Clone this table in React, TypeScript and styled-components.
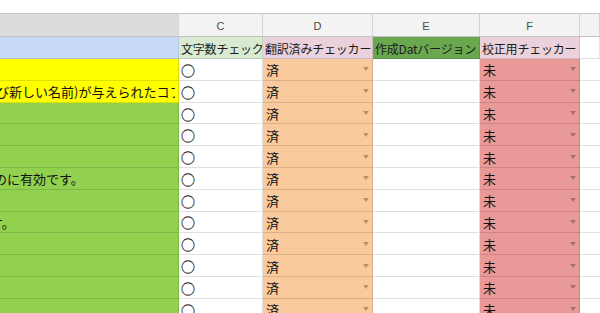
import React from 'react';
import styled, { createGlobalStyle } from 'styled-components';

const GlobalStyle = createGlobalStyle`
  html, body {
    margin: 0;
    padding: 0;
    background: #ffffff;
    overflow: hidden;
  }
`;

type ColKey = 'ab' | 'c' | 'd' | 'e' | 'f' | 'g';

const COLS = '179px 84px 110px 107px 100px 1fr';
const JP_FONT = `"MS PGothic", "Noto Sans CJK JP", sans-serif`;

// 列見出し
const headers: { key: ColKey; label: string; selected?: boolean }[] = [
  { key: 'ab', label: '', selected: true },
  { key: 'c', label: 'C' },
  { key: 'd', label: 'D' },
  { key: 'e', label: 'E' },
  { key: 'f', label: 'F' },
  { key: 'g', label: '' },
];

// 1行目（項目名）
const titles: { key: ColKey; text: string; bg: string }[] = [
  { key: 'ab', text: '', bg: '#c9daf8' },
  { key: 'c', text: '文字数チェック', bg: '#d9ead3' },
  { key: 'd', text: '翻訳済みチェッカー', bg: '#ead1dc' },
  { key: 'e', text: '作成Datバージョン', bg: '#6aa84f' },
  { key: 'f', text: '校正用チェッカー', bg: '#ead1dc' },
  { key: 'g', text: '', bg: '#ffffff' },
];

interface RowData {
  bg: string;
  text?: string;
  indent?: number;
}

const rows: RowData[] = [
  { bg: '#ffff00' },
  { bg: '#ffff00', text: 'び新しい名前)が与えられたコフ', indent: -4 },
  { bg: '#92d050' },
  { bg: '#92d050' },
  { bg: '#92d050' },
  { bg: '#92d050', text: 'のに有効です。', indent: -6 },
  { bg: '#92d050' },
  { bg: '#92d050', text: 'す。', indent: -10 },
  { bg: '#92d050' },
  { bg: '#92d050' },
  { bg: '#92d050' },
  { bg: '#92d050' },
];

const App: React.FC = () => {
  return (
    <>
      <GlobalStyle />
      <Page>
        <TopStrip />
        <Sheet>
          {headers.map((h) => (
            <ColHead key={h.key} $selected={h.selected}>
              {h.label}
            </ColHead>
          ))}
          {titles.map((t) => (
            <TitleCell key={t.key} $bg={t.bg}>
              {t.text}
            </TitleCell>
          ))}
          {rows.map((r, i) => (
            <React.Fragment key={i}>
              <Cell $bg={r.bg}>
                {r.text && <Overflow style={{ textIndent: r.indent }}>{r.text}</Overflow>}
              </Cell>
              <Cell $bg="#ffffff">
                <Mark>○</Mark>
              </Cell>
              <Cell $bg="#f9cb9c" $dropdown>
                済
              </Cell>
              <Cell $bg="#ffffff" />
              <Cell $bg="#ea9999" $dropdown>
                未
              </Cell>
              <Cell $bg="#ffffff" $last />
            </React.Fragment>
          ))}
        </Sheet>
      </Page>
    </>
  );
};

export default App;

const Page = styled.div`
  width: 600px;
  height: 313px;
  overflow: hidden;
  background: #ffffff;
`;

const TopStrip = styled.div`
  height: 14px;
  border-bottom: 1px solid #c6c6c6;
  box-sizing: border-box;
  background: #ffffff;
`;

const Sheet = styled.div`
  display: grid;
  grid-template-columns: ${COLS};
  grid-template-rows: 23px 22px;
  grid-auto-rows: 21.8px;
`;

const ColHead = styled.div<{ $selected?: boolean }>`
  display: flex;
  align-items: center;
  justify-content: center;
  box-sizing: border-box;
  background: ${(p) => (p.$selected ? '#dcdcdc' : '#f3f3f3')};
  border-right: 1px solid #d4d4d4;
  border-bottom: 1px solid #c0c0c0;
  font-family: 'Liberation Sans', Arial, sans-serif;
  font-size: 11px;
  color: #4a4a4a;
  padding-top: 1px;
`;

const TitleCell = styled.div<{ $bg: string }>`
  display: flex;
  align-items: center;
  box-sizing: border-box;
  padding: 2px 0 0 2px;
  background: ${(p) => p.$bg};
  border-right: 1px solid rgba(0, 0, 0, 0.1);
  border-bottom: 1px solid rgba(0, 0, 0, 0.12);
  font-family: ${JP_FONT};
  font-size: 12px;
  letter-spacing: -0.2px;
  color: #1a1a1a;
  white-space: nowrap;
  overflow: hidden;
`;

const Cell = styled.div<{ $bg: string; $dropdown?: boolean; $last?: boolean }>`
  position: relative;
  display: flex;
  align-items: center;
  box-sizing: border-box;
  padding: 1px 0 0 3px;
  background: ${(p) => p.$bg};
  border-right: 1px solid ${(p) => (p.$last ? 'transparent' : 'rgba(0, 0, 0, 0.13)')};
  border-bottom: 1px solid rgba(0, 0, 0, 0.12);
  font-family: ${JP_FONT};
  font-size: 13px;
  color: #111111;
  white-space: nowrap;
  overflow: hidden;

  ${(p) =>
    p.$dropdown &&
    `
    &::after {
      content: '';
      position: absolute;
      right: 3px;
      top: 50%;
      margin-top: -2px;
      border-left: 3px solid transparent;
      border-right: 3px solid transparent;
      border-top: 4px solid rgba(0, 0, 0, 0.28);
    }
  `}
`;

// 丸印は少し太めに見せる
const Mark = styled.span`
  font-size: 14px;
  color: #333333;
  margin-left: -1px;
  -webkit-text-stroke: 0.3px #333333;
`;

const Overflow = styled.span`
  display: block;
  width: 100%;
  margin-left: -3px;
  white-space: nowrap;
  overflow: hidden;
`;
